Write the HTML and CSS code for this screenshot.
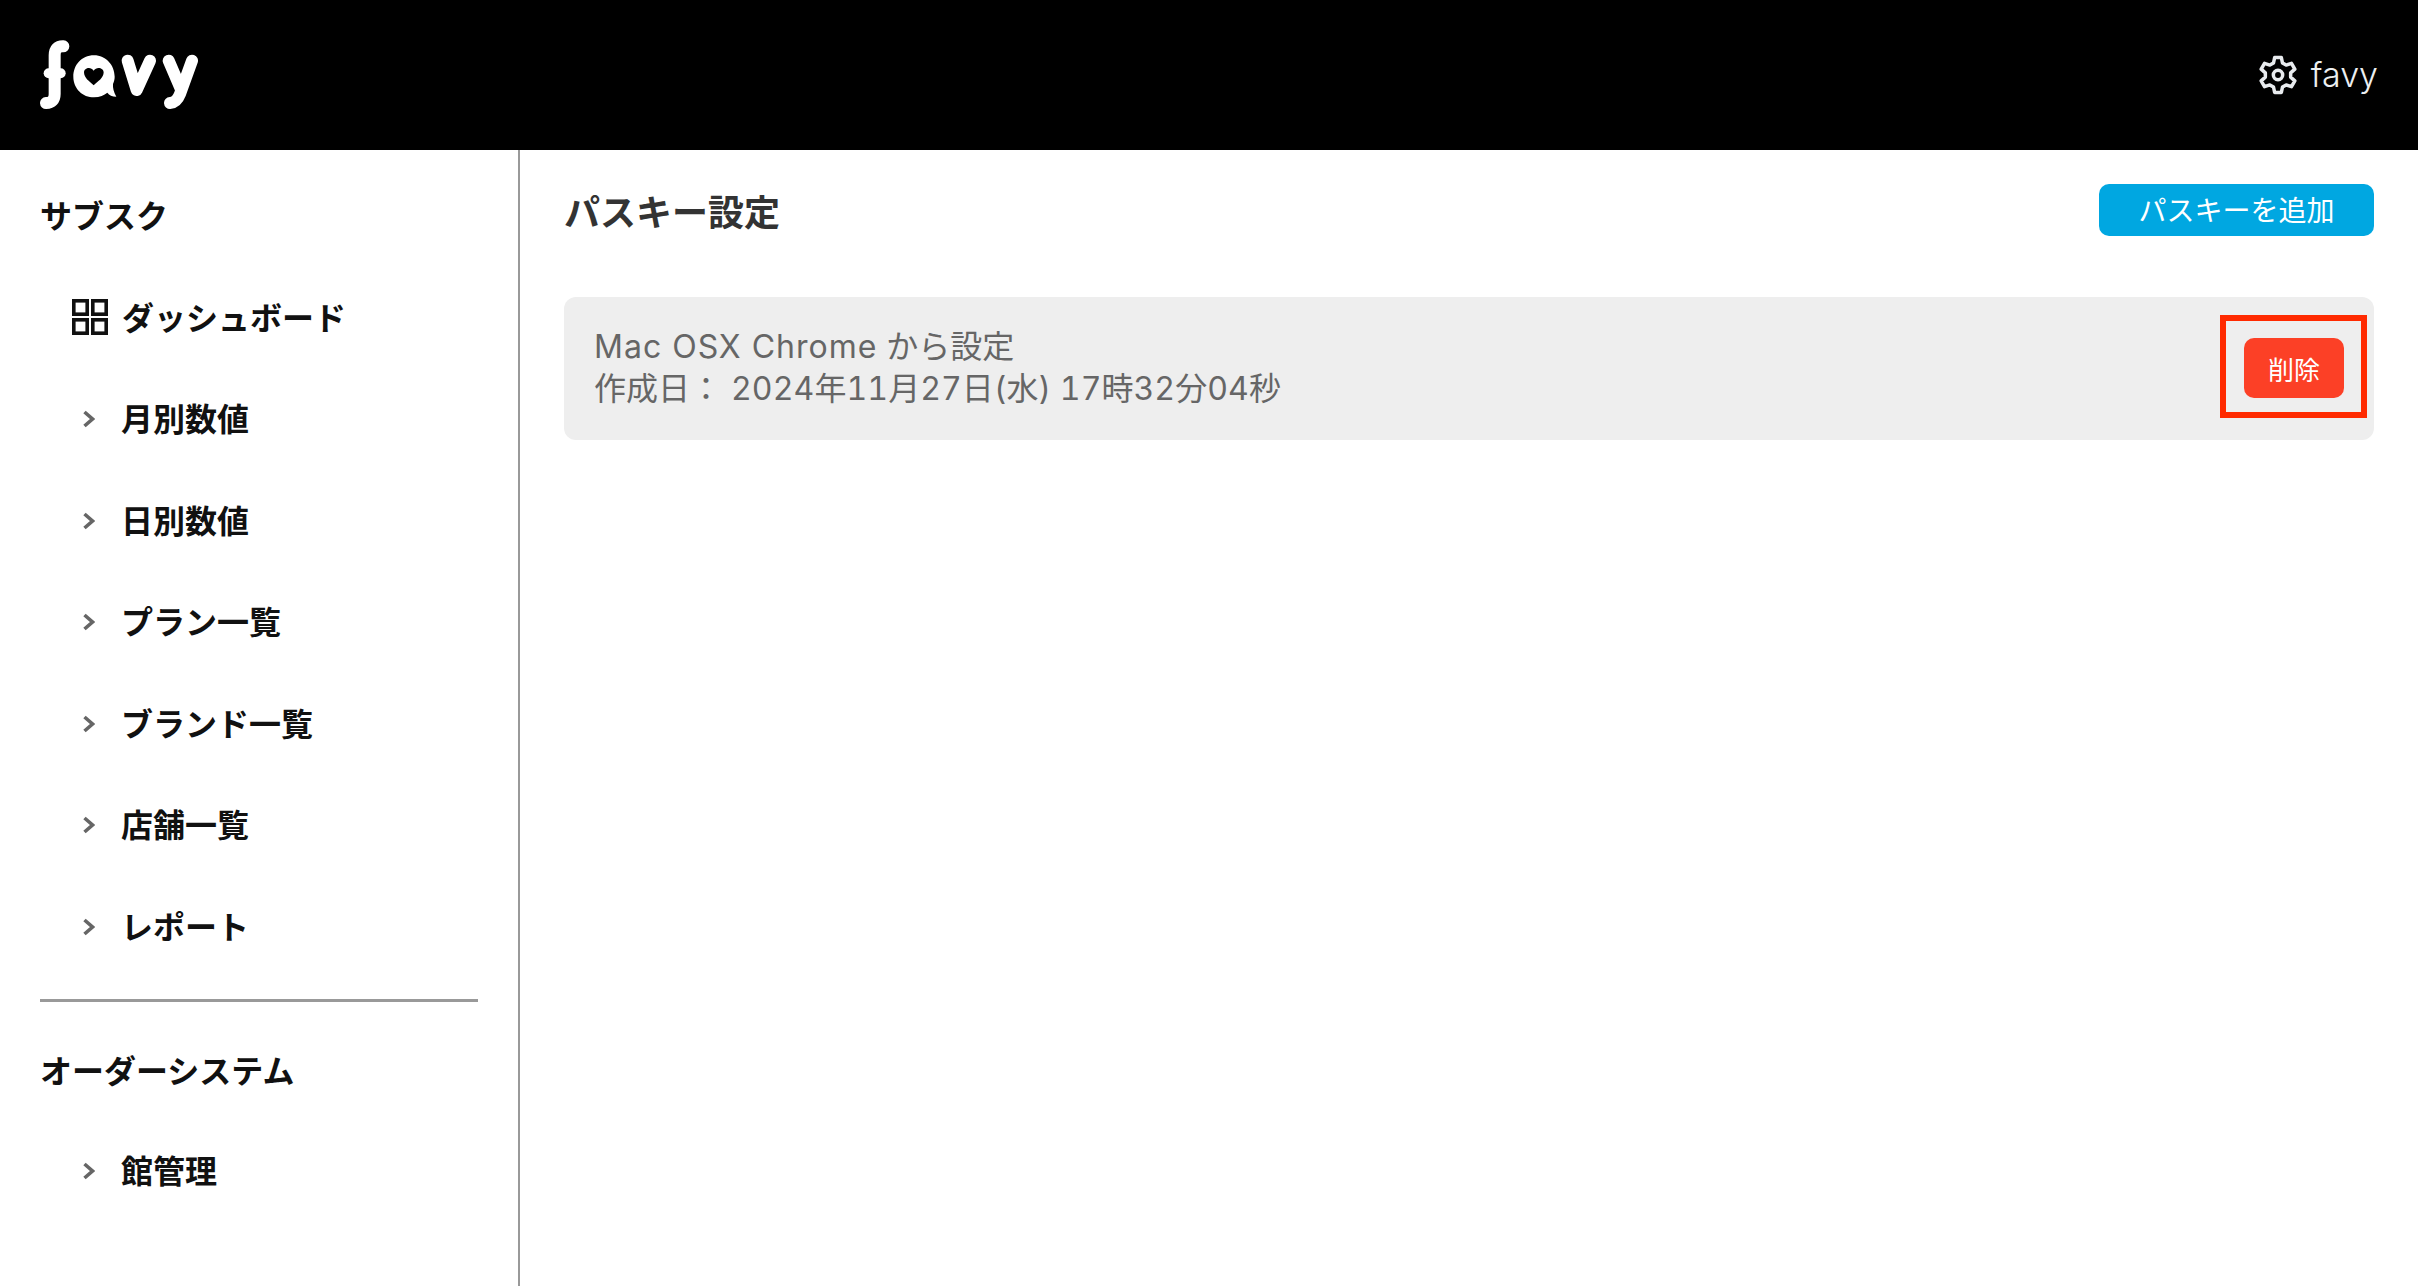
FILE: index.html
```html
<!DOCTYPE html>
<html lang="ja">
<head>
<meta charset="utf-8">
<title>パスキー設定</title>
<link rel="stylesheet" href="styles.css">
</head>
<body>
<header class="topbar">
  <svg class="logo" viewBox="60 60 477 210" aria-label="favy">
    <g fill="none" stroke="#fff" stroke-linecap="round" stroke-linejoin="round">
      <path stroke-width="36" d="M130 79 Q104 78 104 106 V222 Q104 248 78 249"/>
      <path stroke-width="30" d="M86 160 H122"/>
      <path stroke-width="36" d="M323 122 L350 210 L390 122"/>
      <path stroke-width="36" d="M446 122 L482 206"/>
      <path stroke-width="36" d="M516 122 L480 222 Q470 248 450 249"/>
    </g>
    <path fill="#fff" d="M222 106 C184 106 160 136 160 170 C160 206 188 232 222 232 C240 232 252 226 262 218 C268 226 276 230 289 230 C281 216 278 204 279 192 C282 184 284 178 284 170 C284 136 258 106 222 106 Z"/>
    <path fill="#000" d="M221 196 C208 184 192 174 192 157 C192 144 212 138 221 152 C230 138 251 144 251 157 C251 174 234 184 221 196 Z"/>
  </svg>
  <div class="account">
    <svg class="gear" viewBox="0 0 24 24" fill="none" stroke="#e8ebee" stroke-width="2.1" stroke-linejoin="round">
      <circle cx="12" cy="12" r="2.8"/>
      <path d="M10 1.5H14L14.7 4.8 16.89 6.06 20.09 5.02 22.09 8.48 19.59 10.74V13.26L22.09 15.52 20.09 18.98 16.89 17.94 14.7 19.2 14 22.5H10L9.3 19.2 7.11 17.94 3.91 18.98 1.91 15.52 4.41 13.26V10.74L1.91 8.48 3.91 5.02 7.11 6.06 9.3 4.8Z"/>
    </svg>
    <span class="account-name">favy</span>
  </div>
</header>
<div class="layout">
  <nav class="sidebar">
    <h2 class="group-title">サブスク</h2>
    <ul class="menu">
      <li class="menu-item">
        <svg class="grid-icon" viewBox="0 0 36 36" fill="none" stroke="#111" stroke-width="3.6">
          <rect x="1.8" y="1.8" width="13.4" height="13.4"/><rect x="20.8" y="1.8" width="13.4" height="13.4"/>
          <rect x="1.8" y="20.8" width="13.4" height="13.4"/><rect x="20.8" y="20.8" width="13.4" height="13.4"/>
        </svg>ダッシュボード</li>
      <li class="menu-item"><svg class="chev" viewBox="0 0 12 18" fill="none"><path d="M1.5 2l8 7-8 7" stroke="#666" stroke-width="3.6"/></svg>月別数値</li>
      <li class="menu-item"><svg class="chev" viewBox="0 0 12 18" fill="none"><path d="M1.5 2l8 7-8 7" stroke="#666" stroke-width="3.6"/></svg>日別数値</li>
      <li class="menu-item"><svg class="chev" viewBox="0 0 12 18" fill="none"><path d="M1.5 2l8 7-8 7" stroke="#666" stroke-width="3.6"/></svg>プラン一覧</li>
      <li class="menu-item"><svg class="chev" viewBox="0 0 12 18" fill="none"><path d="M1.5 2l8 7-8 7" stroke="#666" stroke-width="3.6"/></svg>ブランド一覧</li>
      <li class="menu-item"><svg class="chev" viewBox="0 0 12 18" fill="none"><path d="M1.5 2l8 7-8 7" stroke="#666" stroke-width="3.6"/></svg>店舗一覧</li>
      <li class="menu-item"><svg class="chev" viewBox="0 0 12 18" fill="none"><path d="M1.5 2l8 7-8 7" stroke="#666" stroke-width="3.6"/></svg>レポート</li>
    </ul>
    <hr class="divider">
    <h2 class="group-title">オーダーシステム</h2>
    <ul class="menu">
      <li class="menu-item"><svg class="chev" viewBox="0 0 12 18" fill="none"><path d="M1.5 2l8 7-8 7" stroke="#666" stroke-width="3.6"/></svg>館管理</li>
    </ul>
  </nav>
  <main class="content">
    <div class="page-head">
      <h1 class="page-title">パスキー設定</h1>
      <button class="add-btn">パスキーを追加</button>
    </div>
    <div class="key-card">
      <div class="key-info">
        <div><span class="latin">Mac OSX Chrome</span> から設定</div>
        <div>作成日： <span class="num">2024</span>年<span class="num">11</span>月<span class="num">27</span>日<span class="num">(</span>水<span class="num">) 17</span>時<span class="num">32</span>分<span class="num">04</span>秒</div>
      </div>
      <button class="del-btn">削除</button>
      <span class="highlight"></span>
    </div>
  </main>
</div>
</body>
</html>
```
FILE: styles.css
```css
* { box-sizing: border-box; }
html, body { margin: 0; padding: 0; height: 100%; }
body {
  background: #fff;
  color: #111;
  font-family: "Noto Sans CJK JP", "Inter", sans-serif;
  overflow: hidden;
}
.topbar {
  height: 150px;
  background: #000;
  display: flex;
  align-items: center;
  justify-content: space-between;
  padding: 0 40px;
}
.logo { width: 159px; height: 70px; display: block; }
.account { display: flex; align-items: center; gap: 13px; }
.gear { width: 40px; height: 40px; display: block; }
.account-name { color: #eceff1; font-family: "Inter", sans-serif; font-size: 34px; font-weight: 300; line-height: 40px; }
.layout { display: flex; height: 1136px; }
.sidebar {
  width: 520px;
  flex: none;
  border-right: 2px solid #999;
  padding: 39px 40px 0;
}
.group-title { margin: 0; font-size: 32px; font-weight: 700; line-height: 50px; }
.menu { list-style: none; margin: 26px 0 0; padding: 0; }
.divider + .group-title + .menu { margin-top: 25px; }
.menu-item {
  display: flex;
  align-items: center;
  height: 101.5px;
  font-size: 32px;
  font-weight: 700;
  padding-left: 42px;
  line-height: 50px;
}
.grid-icon { width: 36px; height: 36px; margin: 2px 14px 0 -10px; flex: none; }
.chev { width: 12px; height: 18px; margin: 4px 26px 0 1px; flex: none; }
.divider { border: 0; height: 3px; background: #999; margin: 23px 0 42px; }
.content { flex: 1; padding: 34px 44px 0 44px; }
.page-head { display: flex; align-items: center; justify-content: space-between; height: 52px; }
.page-title { margin: 0; font-size: 36px; font-weight: 700; color: #333; line-height: 52px; }
.add-btn {
  width: 275px;
  height: 52px;
  border: 0;
  border-radius: 10px;
  background: #00a7e1;
  color: #fff;
  font-family: inherit;
  font-size: 28px;
  line-height: 48px;
  padding: 0 0 3px;
}
.key-card {
  position: relative;
  margin-top: 61px;
  height: 143px;
  background: #eee;
  border-radius: 12px;
  display: flex;
  align-items: center;
  justify-content: space-between;
  padding: 0 30px;
}
.key-info {
  color: #666;
  font-family: "Inter", "Noto Sans CJK JP", sans-serif;
  font-size: 32px;
  font-weight: 400;
  line-height: 42px;
  margin-top: -2px;
}
.latin { letter-spacing: 1px; }
.num { font-variant-numeric: tabular-nums; letter-spacing: 0.1px; }
.del-btn {
  width: 100px;
  height: 60px;
  margin-top: -1px;
  border: 0;
  border-radius: 10px;
  background: #fc4026;
  color: #fff;
  font-family: inherit;
  font-size: 26px;
  padding: 0;
}
.highlight {
  position: absolute;
  top: 18px;
  right: 7px;
  width: 147px;
  height: 103px;
  border: 6px solid #ff2a00;
}
```
